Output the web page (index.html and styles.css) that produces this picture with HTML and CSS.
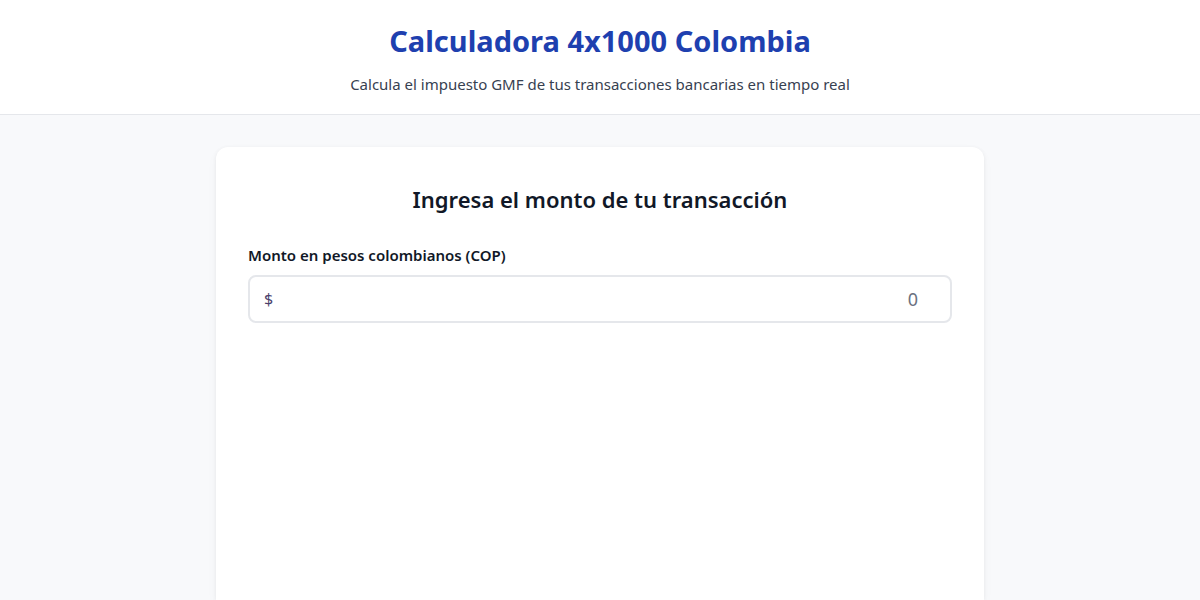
FILE: index.html
```html
<!DOCTYPE html>
<html lang="es">
<head>
<meta charset="utf-8">
<title>Calculadora 4x1000 Colombia</title>
<link rel="stylesheet" href="styles.css">
</head>
<body>
<header class="site-header">
  <h1 class="title">Calculadora 4x1000 Colombia</h1>
  <p class="subtitle">Calcula el impuesto GMF de tus transacciones bancarias en tiempo real</p>
</header>
<main class="main">
  <section class="card">
    <h2 class="card-title">Ingresa el monto de tu transacción</h2>
    <label class="label" for="monto">Monto en pesos colombianos (COP)</label>
    <div class="input-wrap">
      <span class="currency">$</span>
      <input id="monto" class="input" type="text" placeholder="0">
    </div>
  </section>
</main>
</body>
</html>
```

FILE: styles.css
```css
* { box-sizing: border-box; }
html, body { margin: 0; padding: 0; }
body {
  font-family: "Noto Sans", "Open Sans", sans-serif;
  background: #f8f9fb;
  color: #111827;
  height: 100vh;
  display: flex;
  flex-direction: column;
  overflow: hidden;
}
.site-header {
  background: #ffffff;
  border-bottom: 1px solid #e5e7eb;
  height: 115px;
  flex: none;
  padding-top: 21px;
  text-align: center;
}
.title {
  margin: 0;
  font-size: 29px;
  line-height: 40px;
  font-weight: 700;
  color: #1e40af;
}
.subtitle {
  margin: 12px 0 0;
  font-size: 15px;
  line-height: 22px;
  color: #374151;
}
.main {
  flex: 1;
  min-height: 0;
  display: flex;
  justify-content: center;
  padding-top: 32px;
}
.card {
  width: 768px;
  height: 100%;
  background: #ffffff;
  border-radius: 12px 12px 0 0;
  box-shadow: 0 1px 4px rgba(0,0,0,0.06), 0 4px 12px rgba(0,0,0,0.03);
  padding: 36px 32px 0;
}
.card-title {
  margin: 0 0 30px;
  text-align: center;
  font-size: 22px;
  line-height: 32px;
  font-weight: 600;
  color: #111827;
}
.label {
  display: block;
  font-size: 15px;
  line-height: 20px;
  font-weight: 600;
  color: #111827;
  margin-bottom: 10px;
}
.input-wrap {
  display: flex;
  align-items: center;
  height: 48px;
  border: 2px solid #e5e7eb;
  border-radius: 8px;
  padding: 0 30px 0 14px;
}
.currency {
  font-size: 16px;
  color: #4b3f6b;
}
.input {
  flex: 1;
  border: 0;
  outline: none;
  background: transparent;
  text-align: right;
  font-family: inherit;
  font-size: 18px;
  color: #111827;
}
.input::placeholder { color: #6b7280; }
```
